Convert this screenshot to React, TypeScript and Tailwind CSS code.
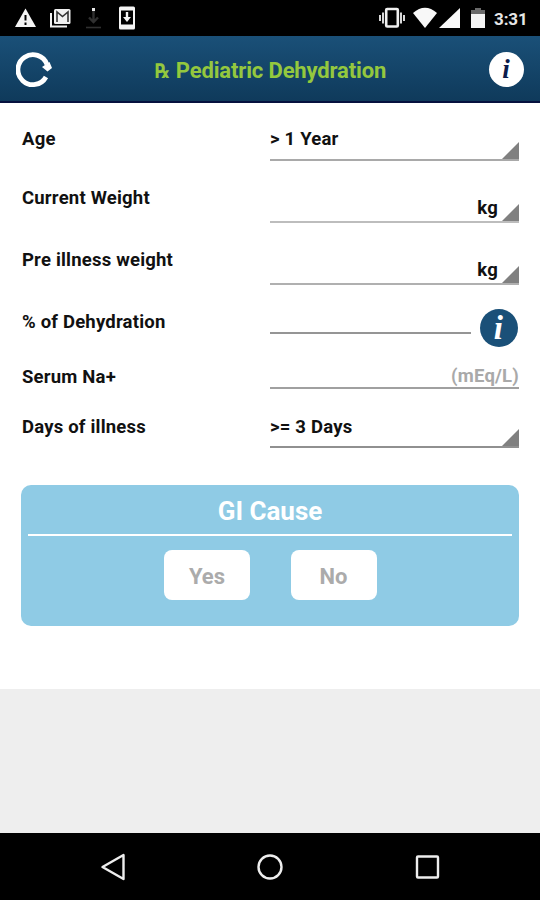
import React from "react";

const fields = [
  { label: "Age", value: "> 1 Year", spinner: true, row: "h-[58px] pt-[24px]", line: "border-[#a9a9a9]" },
  { label: "Current Weight", unit: "kg", spinner: true, row: "h-[62px] pt-[25px]", line: "border-[#bdbdbd]" },
  { label: "Pre illness weight", unit: "kg", spinner: true, row: "h-[62px] pt-[25px]", line: "border-[#b0b0b0]" },
  { label: "% of Dehydration", info: true, row: "h-[49px] pt-[25px]", line: "border-[#959595]" },
  { label: "Serum Na+", hint: "(mEq/L)", row: "h-[55px] pt-[31px]", line: "border-[#a0a0a0]" },
  { label: "Days of illness", value: ">= 3 Days", spinner: true, row: "h-[59px] pt-[26px]", line: "border-[#909090]" },
];

function StatusBar() {
  return (
    <div className="flex h-9 items-center justify-between bg-black pl-[14px] pr-3">
      <svg width="124" height="36" viewBox="0 0 124 36" fill="none">
        <path d="M11.5 8.5 22 27H1z" fill="#f4f4f4" />
        <path d="M11.5 15v5.500M11.500 22.500v2.500" stroke="#000" strokeWidth="2" />
        <path d="M37 13v13.500h16" stroke="#f0f0f0" strokeWidth="2" />
        <rect x="40" y="9" width="16.500" height="15" rx="1.500" fill="#f0f0f0" />
        <path d="M43 22V12l5.500 4.500L54 12v10" stroke="#333" strokeWidth="1.600" />
        <path d="M79.500 10v11M75 17.500l4.500 4.500 4.500-4.500" stroke="#303030" strokeWidth="2.400" />
        <path d="M72 27.500h15" stroke="#303030" strokeWidth="1.600" />
        <path d="M78 8h3v3h-3z" fill="#e8e8e8" />
        <path fillRule="evenodd" d="M106.500 6.500h13q1.500 0 1.500 1.500v20q0 1.500-1.500 1.500h-13q-1.500 0-1.500-1.500V8q0-1.500 1.500-1.500zM107 10.500v14h12v-14z" fill="#f4f4f4" />
        <path d="M113 12v6" stroke="#f4f4f4" strokeWidth="2.400" />
        <path d="M109 17h8l-4 5z" fill="#f4f4f4" />
      </svg>
      <div className="flex items-center">
        <svg width="109" height="36" viewBox="0 0 109 36" fill="none">
          <path d="M1 15v6M4 12.500v11M22 12.500v11M25 15v6" stroke="#d8d8d8" strokeWidth="2" />
          <rect x="7.200" y="9" width="11.600" height="17.500" rx="1" stroke="#f0f0f0" strokeWidth="2.600" />
          <path d="M34 13q12-10.500 24 0L46 28z" fill="#f8f8f8" />
          <path d="M81 8v20H60z" fill="#f8f8f8" />
          <path d="M96 8h6v2h4v4H92v-4h4z" fill="#6a6a6a" />
          <path d="M92 14h14v14H92z" fill="#f4f4f4" />
        </svg>
        <span className="ml-[6px] mt-[1px] w-[34px] text-[17px] font-bold leading-5 tracking-[-0.1px] text-[#e6e6e6]">3:31</span>
      </div>
    </div>
  );
}

function Header() {
  return (
    <header className="flex h-[67px] items-center justify-between border-b-2 border-[#06113f] bg-gradient-to-b from-[#1a5078] to-[#0f3a5b] px-4 pt-[2px]">
      <svg width="36" height="36" viewBox="0 0 36 36" fill="none">
        <path d="M30 25A15 15 0 1 1 31 12.500" stroke="#fff" strokeWidth="4.800" />
        <path d="M26 15 33.500 10l2.500 6-4.500 3.500z" fill="#fff" />
      </svg>
      <h1 className="mt-[2px] flex items-baseline text-[22px] font-bold leading-7 tracking-[-0.15px] text-[#94c83e]">
        <span className="mr-[6px] w-[15px] origin-left scale-x-[0.82] font-['DejaVu_Sans'] text-[20px]">℞</span>
        Pediatric Dehydration
      </h1>
      <button className="size-[35px] rounded-full bg-white pr-px font-['Liberation_Serif'] text-[27px] font-bold italic leading-[33px] text-[#0b1c4c]">
        i
      </button>
    </header>
  );
}

function Spinner() {
  return (
    <svg className="shrink-0 self-end" width="17" height="17" viewBox="0 0 17 17">
      <path d="M17 0v17H0z" fill="#808080" />
    </svg>
  );
}

function Form() {
  return (
    <div className="px-[21px] text-[18.5px] font-bold leading-6 tracking-[0.2px] text-[#111]">
      {fields.map((field) => (
        <div key={field.label} className={`flex ${field.row}`}>
          <label className="w-[249px] pl-px">{field.label}</label>
          <div className={`flex flex-1 border-b-2 ${field.line}`}>
            <span className="flex-1">{field.value}</span>
            {field.unit && <span className="mr-1 mt-[10px]">{field.unit}</span>}
            {field.hint && <span className="-mt-px text-[#a9a9a9]">{field.hint}</span>}
            {field.spinner && <Spinner />}
          </div>
          {field.info && (
            <button className="-mt-px ml-[9px] mr-px size-[38px] shrink-0 rounded-full bg-[#1a5078] pr-px font-['Liberation_Serif'] text-[33px] font-bold italic leading-[36px] text-white">
              i
            </button>
          )}
        </div>
      ))}
    </div>
  );
}

function GiCause() {
  return (
    <section className="mx-[21px] mt-[37px] h-[141px] rounded-[10px] bg-[#8fcbe5] px-[7px]">
      <h2 className="h-[51px] border-b-2 border-white pt-[10px] text-center text-[26px] font-bold leading-8 text-white">
        GI Cause
      </h2>
      <div className="mt-[14px] flex justify-center gap-[41px] text-[22px] font-bold text-[#ababab]">
        <button className="h-[50px] w-[86px] rounded-[8px] bg-white pl-px pt-[2px]">Yes</button>
        <button className="h-[50px] w-[86px] rounded-[8px] bg-white pt-[2px]">No</button>
      </div>
    </section>
  );
}

function NavBar() {
  return (
    <nav className="flex h-[67px] items-center justify-between bg-black px-[100px]">
      <svg width="26" height="30" viewBox="0 0 26 30" fill="none" stroke="#eee" strokeWidth="2.400" strokeLinejoin="round">
        <path d="M2.500 15 23.500 3v24z" />
      </svg>
      <svg width="28" height="30" viewBox="0 0 28 30" fill="none" stroke="#eee" strokeWidth="2.400">
        <circle cx="14" cy="15" r="11.500" />
      </svg>
      <svg width="26" height="30" viewBox="0 0 26 30" fill="none" stroke="#eee" strokeWidth="2.400">
        <rect x="3" y="4.500" width="21" height="21" rx="1" />
      </svg>
    </nav>
  );
}

export default function App() {
  return (
    <div className="flex h-[900px] w-[540px] flex-col overflow-hidden bg-[#eee] font-['Roboto',sans-serif]">
      <StatusBar />
      <Header />
      <main className="h-[586px] bg-white">
        <Form />
        <GiCause />
      </main>
      <div className="flex-1" />
      <NavBar />
    </div>
  );
}
